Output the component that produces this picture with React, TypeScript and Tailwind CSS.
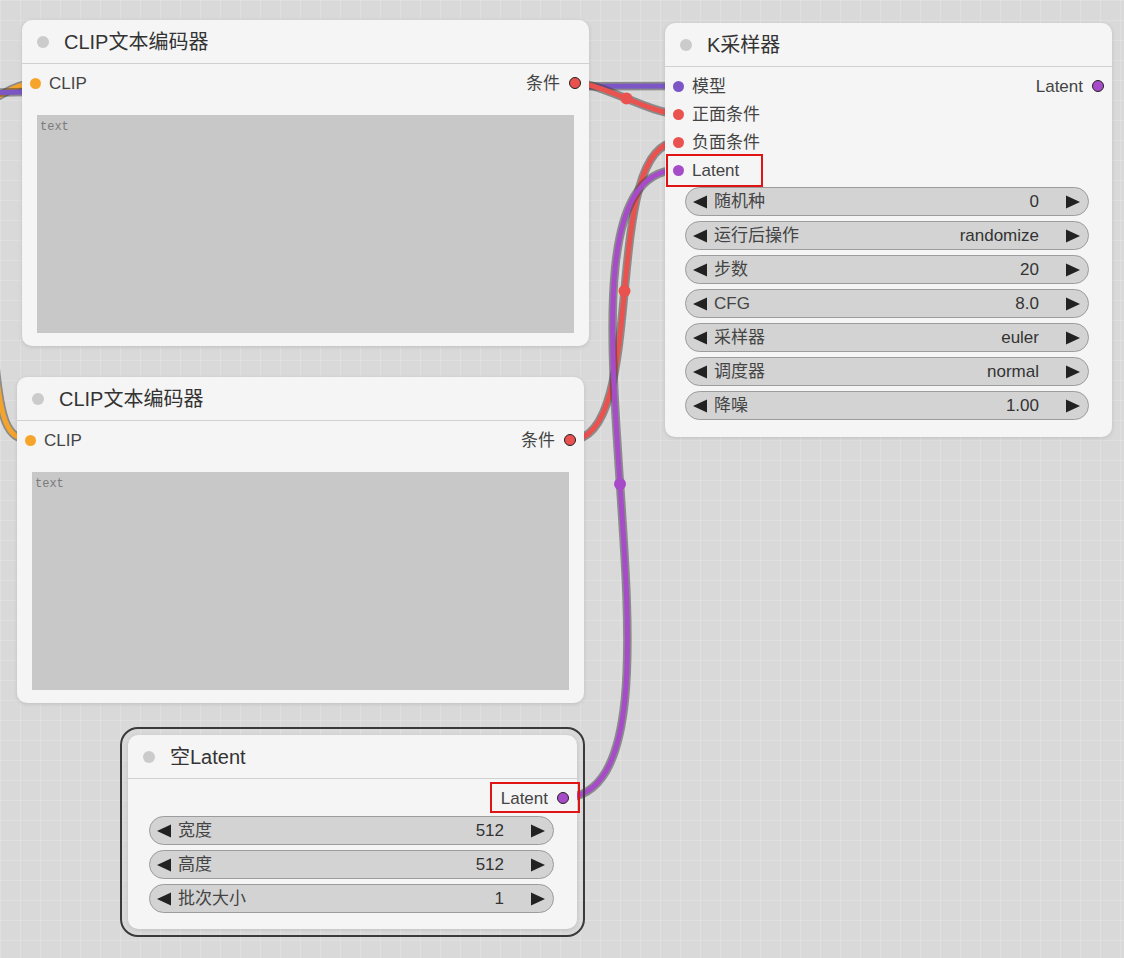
import type { ReactNode } from 'react';

const FONT = "font-['Liberation_Sans','Noto_Sans_CJK_SC',sans-serif]";

/* 节点外框 */
function Node({ className, title, children }: { className: string; title: string; children: ReactNode }) {
  return (
    <div className={`absolute rounded-[10px] bg-[#f5f5f5] shadow-[0_1px_4px_rgba(0,0,0,0.12)] ${className}`}>
      <div className="flex h-[44px] items-center border-b border-[#d0d0d0] pl-[15px]">
        <span className="h-[12px] w-[12px] rounded-full bg-[#cbcbcb]" />
        <span className="ml-[15px] text-[20px] leading-none text-[#333]">{title}</span>
      </div>
      {children}
    </div>
  );
}

function InSlot({ color, label }: { color: string; label: string }) {
  return (
    <div className="flex h-[28px] items-center pl-[8px]">
      <span className={`h-[11px] w-[11px] rounded-full ${color}`} />
      <span className="ml-[8px] text-[17px] leading-none text-[#444]">{label}</span>
    </div>
  );
}

function OutSlot({ color, label }: { color: string; label: string }) {
  return (
    <div className="flex h-[28px] items-center justify-end pr-[8px]">
      <span className="mr-[9px] text-[17px] leading-none text-[#444]">{label}</span>
      <span className={`h-[12px] w-[12px] rounded-full border border-[#222] ${color}`} />
    </div>
  );
}

function Arrow({ dir }: { dir: 'l' | 'r' }) {
  return (
    <svg width="14" height="14" viewBox="0 0 14 14" className="shrink-0">
      <polygon points={dir === 'l' ? '14,0.5 14,13.5 0,7' : '0,0.5 0,13.5 14,7'} fill="#222" />
    </svg>
  );
}

function Widget({ label, value }: { label: string; value: string }) {
  return (
    <div className="flex h-[29px] items-center rounded-full border border-[#9c9c9c] bg-[#d3d3d3] pl-[7px] pr-[8px]">
      <Arrow dir="l" />
      <span className="ml-[7px] flex-1 text-[17px] leading-none text-[#444]">{label}</span>
      <span className="text-[17px] leading-none text-[#333]">{value}</span>
      <span className="ml-[27px]">
        <Arrow dir="r" />
      </span>
    </div>
  );
}

function TextBox() {
  return (
    <div className="mx-[15px] mt-[18px] h-[218px] bg-[#c8c8c8] pl-[3px] pt-[4px] font-['Liberation_Mono',monospace] text-[12px] leading-[16px] text-[#7a7a7a]">
      text
    </div>
  );
}

/* 连线：深色描边 + 彩色线芯 */
function Wire({ d, color }: { d: string; color: string }) {
  return (
    <g>
      <path d={d} fill="none" stroke="#3c3c3c" strokeOpacity="0.5" strokeWidth="8.5" />
      <path d={d} fill="none" stroke={color} strokeWidth="5" />
    </g>
  );
}

export default function App() {
  const purple = '#7d56c6';
  const red = '#e9524f';
  const orange = '#f4a42c';
  const latent = '#a64cc8';

  return (
    <div
      className={`relative h-[958px] w-[1124px] overflow-hidden bg-[#d9d9d9] bg-[linear-gradient(to_right,rgba(255,255,255,0.16)_1px,transparent_1px),linear-gradient(to_bottom,rgba(255,255,255,0.16)_1px,transparent_1px)] bg-[size:20px_20px] ${FONT}`}
    >
      {/* 连线层 */}
      <svg className="absolute inset-0" width="1124" height="958">
        <Wire d="M -60 124 C -20 114, 8 83, 35 83" color={orange} />
        <Wire d="M -80 94 C 120 90, 380 86, 678 86" color={purple} />
        <Wire d="M -6 350 C 0 420, 6 440, 31 440" color={orange} />
        <Wire d="M 575 83 C 602 83, 651 114, 678 114" color={red} />
        <Wire d="M 571 440 C 650 440, 599 142, 678 142" color={red} />
        <Wire d="M 562 798 C 721 798, 519 170, 678 170" color={latent} />
        <circle cx="626.5" cy="98.5" r="6" fill={red} />
        <circle cx="624.5" cy="291" r="6" fill={red} />
        <circle cx="620" cy="484" r="6" fill={latent} />
      </svg>

      {/* CLIP文本编码器 1 */}
      <Node className="left-[22px] top-[20px] h-[326px] w-[567px]" title="CLIP文本编码器">
        <div className="pt-[5px]">
          <div className="relative h-[28px]">
            <div className="absolute inset-0">
              <InSlot color="bg-[#f7a52a]" label="CLIP" />
            </div>
            <div className="absolute inset-0">
              <OutSlot color="bg-[#e9524f]" label="条件" />
            </div>
          </div>
        </div>
        <TextBox />
      </Node>

      {/* CLIP文本编码器 2 */}
      <Node className="left-[17px] top-[377px] h-[326px] w-[567px]" title="CLIP文本编码器">
        <div className="pt-[5px]">
          <div className="relative h-[28px]">
            <div className="absolute inset-0">
              <InSlot color="bg-[#f7a52a]" label="CLIP" />
            </div>
            <div className="absolute inset-0">
              <OutSlot color="bg-[#e9524f]" label="条件" />
            </div>
          </div>
        </div>
        <TextBox />
      </Node>

      {/* K采样器 */}
      <Node className="left-[665px] top-[23px] h-[414px] w-[447px]" title="K采样器">
        <div className="relative pt-[5px]">
          <InSlot color="bg-[#7d56c6]" label="模型" />
          <InSlot color="bg-[#e9524f]" label="正面条件" />
          <InSlot color="bg-[#e9524f]" label="负面条件" />
          <InSlot color="bg-[#a64cc8]" label="Latent" />
          <div className="absolute left-0 right-0 top-[5px]">
            <OutSlot color="bg-[#a64cc8]" label="Latent" />
          </div>
        </div>
        <div className="mt-[3px] flex flex-col gap-[5px] pl-[20px] pr-[23px]">
          <Widget label="随机种" value="0" />
          <Widget label="运行后操作" value="randomize" />
          <Widget label="步数" value="20" />
          <Widget label="CFG" value="8.0" />
          <Widget label="采样器" value="euler" />
          <Widget label="调度器" value="normal" />
          <Widget label="降噪" value="1.00" />
        </div>
      </Node>

      {/* 空Latent 选中外框 */}
      <div className="absolute left-[120px] top-[727px] h-[210px] w-[465px] rounded-[18px] border-2 border-[#3a3a3a]" />
      <Node className="left-[128px] top-[735px] h-[194px] w-[449px]" title="空Latent">
        <div className="pt-[5px]">
          <OutSlot color="bg-[#a64cc8]" label="Latent" />
        </div>
        <div className="mt-[4px] flex flex-col gap-[5px] pl-[21px] pr-[23px]">
          <Widget label="宽度" value="512" />
          <Widget label="高度" value="512" />
          <Widget label="批次大小" value="1" />
        </div>
      </Node>

      {/* 标注框 */}
      <div className="absolute left-[666px] top-[154px] h-[33px] w-[97px] border-2 border-[#e01414]" />
      <div className="absolute left-[490px] top-[782px] h-[31px] w-[90px] border-2 border-[#e01414]" />
    </div>
  );
}
